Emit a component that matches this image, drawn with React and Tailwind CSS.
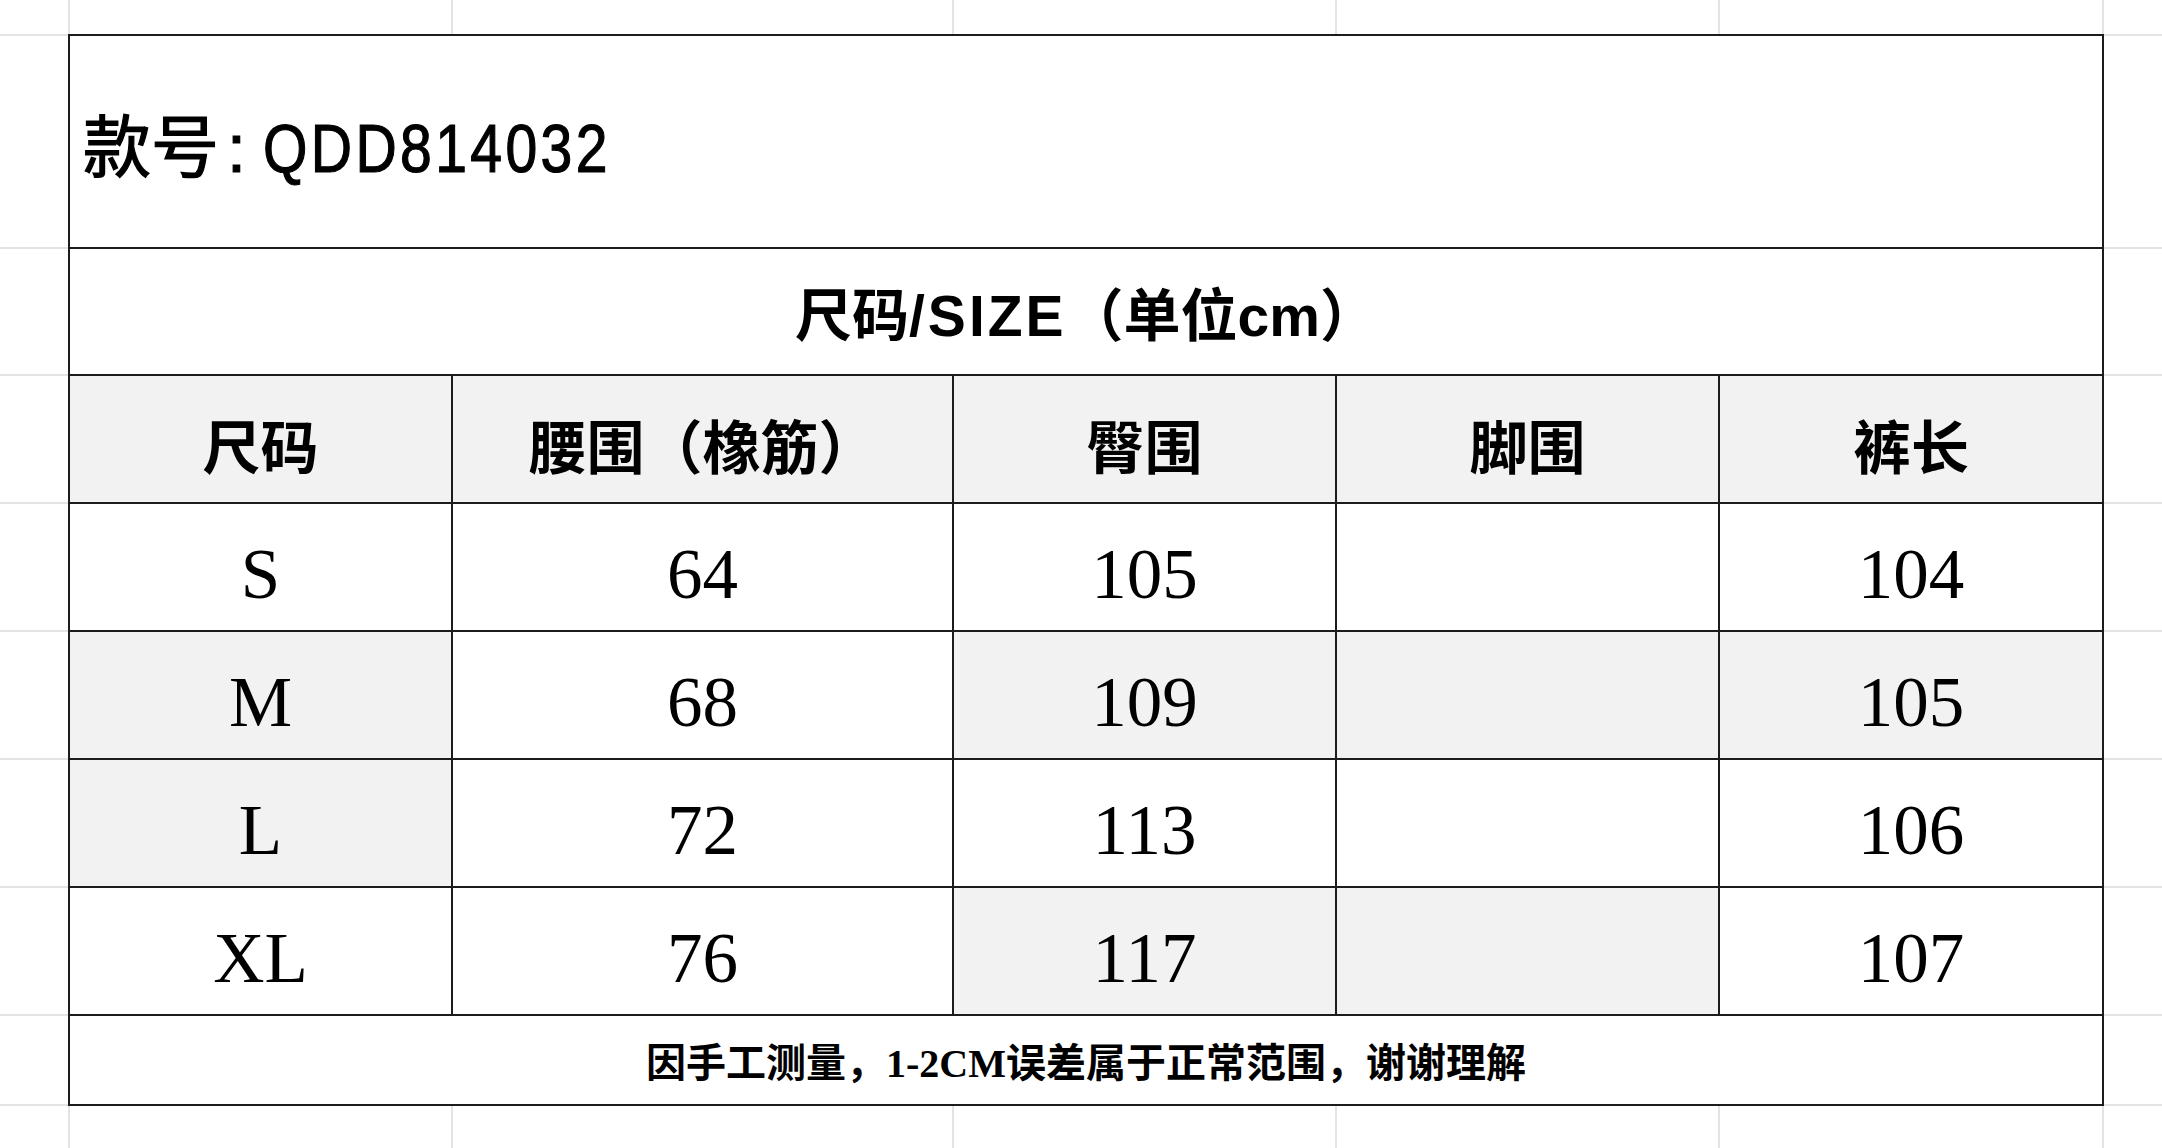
export default function App() {
  const margin = Array.from({ length: 30 });
  const G = "bg-[#f2f2f2]";
  const W = "bg-white";
  const rows = [
    { s: "S", v: ["64", "105", "", "104"], bg: [W, W, W, W, W] },
    { s: "M", v: ["68", "109", "", "105"], bg: [G, W, G, G, G] },
    { s: "L", v: ["72", "113", "", "106"], bg: [G, W, W, W, W] },
    { s: "XL", v: ["76", "117", "", "107"], bg: [W, W, G, G, W] },
  ];
  const headers = ["尺码", "腰围（橡筋）", "臀围", "脚围", "裤长"];
  return (
    <div className="w-[2162px] h-[1148px] bg-[#e4e4e4] grid grid-cols-[68px_381px_499px_381px_381px_382px_58px] grid-rows-[34px_211px_125px_126px_126px_126px_126px_126px_88px_42px] gap-[2px] overflow-hidden text-black">
      <div className="col-start-2 col-span-5 row-start-2 row-span-8 -m-[2px] bg-[#1c1c1c] p-[2px] grid grid-cols-[381px_499px_381px_381px_382px] grid-rows-[211px_125px_126px_126px_126px_126px_126px_88px] gap-[2px]">
        <div className="col-span-5 bg-white flex items-center pl-[13px] pt-[12px]">
          <span className="font-['Liberation_Sans','Noto_Sans_CJK_SC',sans-serif] text-[68px] leading-none font-normal [-webkit-text-stroke:1.2px_black]">
            款号<span className="ml-[8px] mr-[17px]">:</span>
            <span className="inline-block origin-left scale-x-[0.84] tracking-[4px]">QDD814032</span>
          </span>
        </div>
        <div className="col-span-5 bg-white flex items-center justify-center pt-[10px]">
          <span className="font-['Liberation_Sans','Noto_Sans_CJK_SC',sans-serif] text-[57px] leading-none font-bold">
            尺码<span className="tracking-[3px]">/SIZE</span>（单位cm）
          </span>
        </div>
        {headers.map((h) => (
          <div key={h} className="bg-[#f2f2f2] flex items-center justify-center pt-[10px]">
            <span className="font-['Noto_Sans_CJK_SC',sans-serif] text-[58px] leading-none font-bold">
              {h}
            </span>
          </div>
        ))}
        {rows.map((r) => (
          <>
            <div key={r.s} className={`${r.bg[0]} flex items-center justify-center pt-[14px]`}>
              <span className="font-['Liberation_Serif',serif] text-[71px] leading-none">{r.s}</span>
            </div>
            {r.v.map((v, i) => (
              <div key={r.s + i} className={`${r.bg[i + 1]} flex items-center justify-center pt-[14px]`}>
                <span className="font-['Liberation_Serif',serif] text-[71px] leading-none">{v}</span>
              </div>
            ))}
          </>
        ))}
        <div className="col-span-5 bg-white flex items-center justify-center pt-[8px]">
          <span className="font-['Liberation_Serif','Noto_Sans_CJK_SC',serif] text-[40px] leading-none font-bold">
            因手工测量，1-2CM误差属于正常范围，谢谢理解
          </span>
        </div>
      </div>
      {margin.map((_, i) => (
        <div key={i} className="bg-white" />
      ))}
    </div>
  );
}
